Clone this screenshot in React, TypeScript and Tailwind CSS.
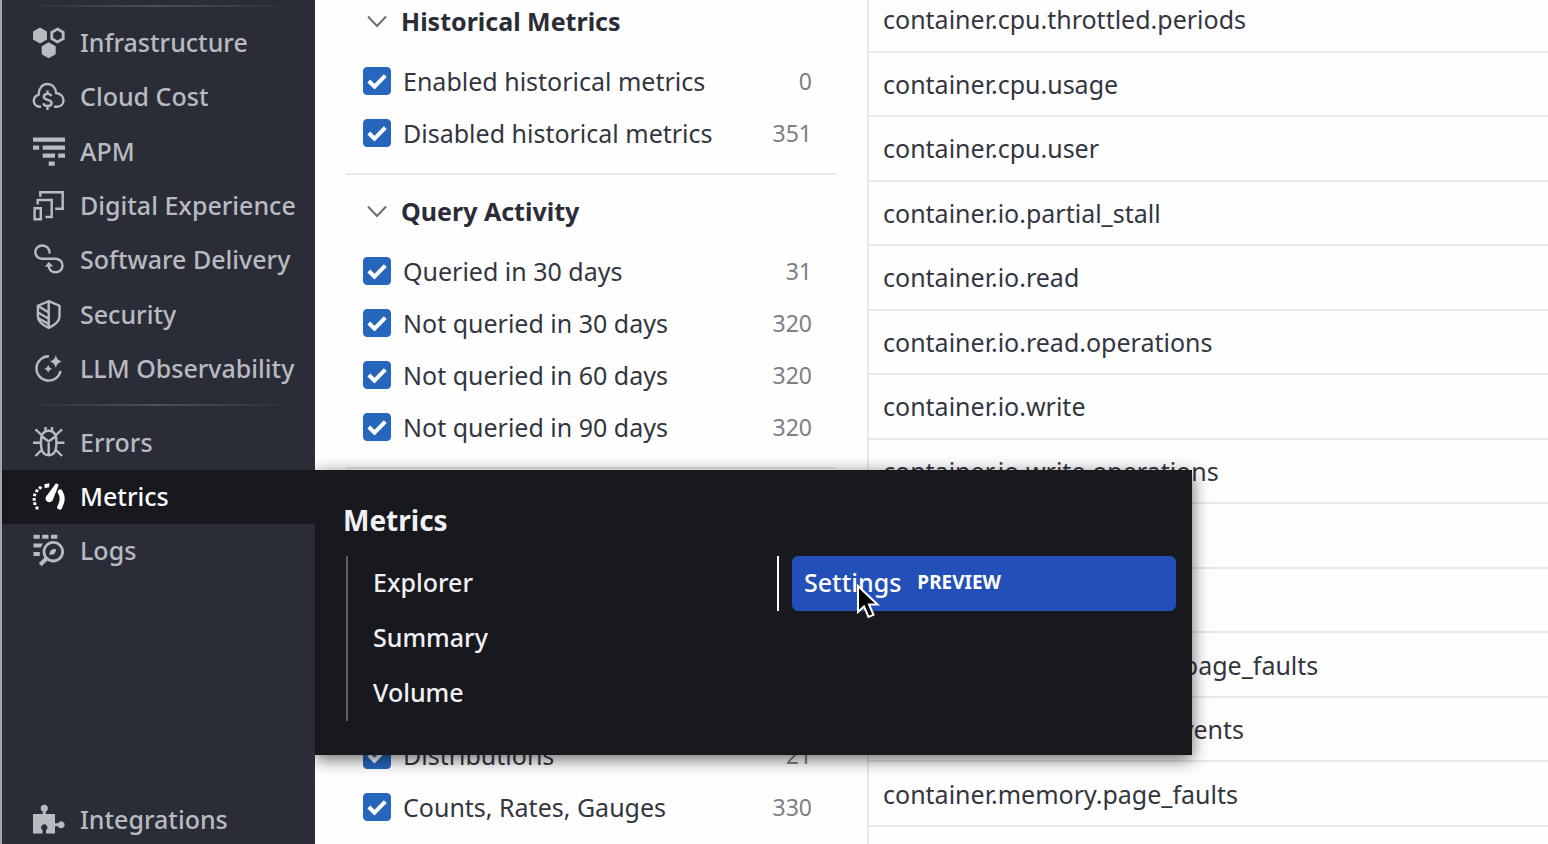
import React from "react";

type IconProps = { children: React.ReactNode };

function Icon({ children }: IconProps) {
  return (
    <svg
      viewBox="0 0 33 32"
      width="33"
      height="32"
      fill="none"
      stroke="currentColor"
      strokeWidth="2.4"
      className="shrink-0 overflow-visible"
      aria-hidden="true"
    >
      {children}
    </svg>
  );
}

const InfrastructureIcon = (
  <Icon>
    <path d="M8 .5l7 4v8l-7 4-7-4v-8z" fill="currentColor" stroke="none" />
    <path d="M25.5 2l5.7 3.2v6.6L25.5 15l-5.7-3.2V5.2z" strokeWidth="2.8" />
    <path d="M16.7 15.2l7 4v8l-7 4-7-4v-8z" fill="currentColor" stroke="none" />
  </Icon>
);

const CloudCostIcon = (
  <Icon>
    <path d="M9 25.8H7.5C4 25.5 1.8 23 1.8 19.8c0-2.9 1.8-5.2 4.7-6C7 7 10.5 3 15.4 3c4.6 0 8.2 3.4 8.7 9 4.500.6 7.400 3.800 7.400 7.500 0 3.600-2.700 6.200-6.300 6.300h-3.200" />
    <path d="M19.300 15.200c-.5-1.700-2-2.300-3.800-2.300-2.200 0-3.700 1.100-3.700 2.900 0 4.200 7.800 2 7.800 6.200 0 1.900-1.700 3-3.900 3-2.200 0-3.900-.9-4.300-2.800M15.500 9.500v4M15.500 24.500v4.500" />
  </Icon>
);

const ApmIcon = (
  <Icon>
    <path
      fill="currentColor"
      stroke="none"
      d="M1 1.500h32v4.200H1zM1 9.500h6.200v4.200H1zM10.700 9.500H33v4.200H10.700zM10.700 17.500H23v4.200H10.700zM26.200 17.500H33v4.200h-6.800zM16.700 25.500h6v4.200h-6z"
    />
  </Icon>
);

const DigitalExperienceIcon = (
  <Icon>
    <path d="M2.600 18.200h6.200v11H2.600zM5.700 14.500V10h14v17h-6.200M8.300 6.700V2.200h22.400v16.500h-7.500" />
  </Icon>
);

const SoftwareDeliveryIcon = (
  <Icon>
    <path d="M17.500 9.500C17.700 4.500 14.600 1.500 10.400 1.500 6.300 1.500 3.300 4.400 3.300 8.100s3 6.600 7.100 6.600h13c4.100 0 7.100 3 7.100 6.800s-3 6.800-7 6.800c-3.800 0-6.500-2.500-6.700-6.300" />
    <path d="M12.800 23l3.800-5 4.800 4.300z" fill="currentColor" stroke="none" />
  </Icon>
);

const SecurityIcon = (
  <Icon>
    <path d="M16.700 2.200l10.800 4.500v10.800c0 5-4.400 8.400-10.800 11.500C10.300 25.900 5.900 22.500 5.900 17.500V6.700zM16.700 2.200V29M7 7.500l9.700 6M6 13.500l10.700 6.200M6 19l10.700 6" />
  </Icon>
);

const LlmIcon = (
  <Icon>
    <path d="M17 3.200A12.200 12.200 0 1 0 28.600 18" />
    <path
      fill="currentColor"
      stroke="none"
      d="M23.800 2.200c1.400 4 2.400 5 6 6.300-3.600 1.300-4.600 2.300-6 6.300-1.400-4-2.400-5-6-6.300 3.600-1.300 4.600-2.300 6-6.300zM16.200 11.800c.9 2.600 1.600 3.200 4 4-2.400.9-3.100 1.600-4 4-.9-2.400-1.600-3.100-4-4 2.400-.8 3.100-1.400 4-4z"
    />
  </Icon>
);

const ErrorsIcon = (
  <Icon>
    <path d="M9.500 9.500C10.500 5.700 13 3.700 16.700 3.700s6.200 2 7.200 5.800c.8 3 .8 10.500-.5 14-1.200 3-3.500 4.700-6.700 4.700s-5.500-1.700-6.700-4.700c-1.300-3.500-1.300-11-.5-14zM9.700 9.200l7 5.300 7-5.300M16.700 14.500V28M13.500 0v4M20 0v4M1 15.700h8M24.500 15.700h8M3.500 2.300l6 5.700M30 2.300L24 8M3.500 29l6.500-6.500M30 29l-6.500-6.500" />
  </Icon>
);

const MetricsIcon = (
  <Icon>
    <path
      fill="currentColor"
      stroke="none"
      d="M3.500 25.500h3v3h-3zM1.300 21.200h3v2.800h-3zM.7 17h3v2.800h-3zM1.500 12.300l3 .6-.8 2.700-2.800-.7zM4.200 8l2.800 1.300-1.600 2.400-2.600-1.500zM8 4.700l2.500 2-2.200 2-2.200-2zM12.300 3.200l5.200-1-.4 4-4.300 1zM24 2.300l2.800 1.500-6 15.200c-1.100 2.200-3.800 2.800-5.700 1.400-1.900-1.400-2-3.700-.6-5.400z"
    />
    <path d="M28.200 11c2.600 4.200 2.500 10-.5 15.200" strokeWidth="5" strokeLinecap="round" />
  </Icon>
);

const LogsIcon = (
  <Icon>
    <path
      fill="currentColor"
      stroke="none"
      d="M1.500-.2h6.300v3.900H1.500zM10.200-.2h6.300v3.900h-6.300zM19-.2h6.300v3.900H19zM1.500 8.500H11l-2.300 3.900H1.500zM1.500 17h6.300v3.900H1.500z"
    />
    <circle cx="21.300" cy="16.700" r="9.300" strokeWidth="2.800" />
    <path d="M14.500 23.500l-6.300 6.200" strokeWidth="4" />
    <path d="M17.500 19.500c0-3.800 2-5.800 6.500-5.600 0 4.200-2.500 6.500-6.500 5.600z" fill="currentColor" stroke="none" />
  </Icon>
);

const IntegrationsIcon = (
  <Icon>
    <path
      fill="currentColor"
      stroke="none"
      d="M1 10h9.800V7.600a3.600 3.600 0 1 1 3 0V10H23v9.300h3a3.500 3.500 0 1 1 0 3H23v7.200h-9v-3.300a3.200 3.200 0 1 0-3.400 0v3.300H1z"
    />
  </Icon>
);

type NavEntry = { label: string; icon: React.ReactNode };

const products: NavEntry[] = [
  { label: "Infrastructure", icon: InfrastructureIcon },
  { label: "Cloud Cost", icon: CloudCostIcon },
  { label: "APM", icon: ApmIcon },
  { label: "Digital Experience", icon: DigitalExperienceIcon },
  { label: "Software Delivery", icon: SoftwareDeliveryIcon },
  { label: "Security", icon: SecurityIcon },
  { label: "LLM Observability", icon: LlmIcon },
];

type NavLinkProps = NavEntry & { active?: boolean };

function NavLink({ label, icon, active = false }: NavLinkProps) {
  return (
    <a
      href="#"
      aria-current={active ? "page" : undefined}
      className={
        active
          ? "flex h-full items-center gap-[15px] bg-[#17191f] pl-[30px] whitespace-nowrap text-white"
          : "flex h-full items-center gap-[15px] pl-[30px] whitespace-nowrap text-[#b8bbc0]"
      }
    >
      {icon}
      <span className="pb-0.5">{label}</span>
    </a>
  );
}

function NavDivider() {
  return (
    <div className="mx-4 h-[2px] shrink-0 bg-linear-to-r from-transparent via-[#4d505b] to-transparent" />
  );
}

function Cursor() {
  return (
    <svg
      viewBox="0 0 24 36"
      width="24"
      height="36"
      className="pointer-events-none absolute top-7 left-16"
      aria-hidden="true"
    >
      <path
        d="M2 2v26l6-5.500 4.500 10.500 5-2.200L13 20.500h8.500z"
        fill="#000"
        stroke="#fff"
        strokeWidth="2"
      />
    </svg>
  );
}

function MetricsMenu() {
  return (
    <div className="absolute top-0 left-full grid h-[285px] w-[877px] content-start bg-[#17191f] pt-8 pr-4 pl-7 text-[#f1f1f3] shadow-[0_4px_16px_rgba(0,0,0,0.6)] [clip-path:inset(-30px_-30px_-30px_0)]">
      <h2 className="text-[28px] leading-9 font-bold">Metrics</h2>
      <div className="mt-[18px] ml-[3px] grid grid-cols-[431px_1fr] items-start">
        <ul className="border-l-2 border-[#5c5e64] pl-[25px]">
          {["Explorer", "Summary", "Volume"].map((label) => (
            <li key={label}>
              <a href="#" className="flex h-[55px] items-center pb-1">
                {label}
              </a>
            </li>
          ))}
        </ul>
        <div className="border-l-2 border-white pl-[13px]">
          <a
            href="#"
            className="relative flex h-[55px] items-center gap-4 rounded-md bg-[#2350b8] pb-1 pl-3 text-white"
          >
            Settings
            <span className="text-[19px] font-bold">PREVIEW</span>
            <Cursor />
          </a>
        </div>
      </div>
    </div>
  );
}

function Sidebar() {
  return (
    <nav
      aria-label="Main"
      className="relative z-10 flex w-[315px] shrink-0 flex-col border-l-2 border-[#a3a6a8] bg-[#2a2d37] pt-[5px] text-[25px] leading-8 font-medium"
    >
      <NavDivider />
      <ul className="mt-[9px] mb-2 grid h-[380px] shrink-0 grid-rows-7">
        {products.map((p) => (
          <li key={p.label}>
            <NavLink {...p} />
          </li>
        ))}
      </ul>
      <NavDivider />
      <ul className="mt-[10px] grid h-[162px] shrink-0 grid-rows-3">
        <li>
          <NavLink label="Errors" icon={ErrorsIcon} />
        </li>
        <li className="relative">
          <NavLink label="Metrics" icon={MetricsIcon} active />
          <MetricsMenu />
        </li>
        <li>
          <NavLink label="Logs" icon={LogsIcon} />
        </li>
      </ul>
      <div className="mt-auto h-12">
        <NavLink label="Integrations" icon={IntegrationsIcon} />
      </div>
    </nav>
  );
}

type Option = [string, number];

function FacetOption({ label, count }: { label: string; count: number }) {
  return (
    <label className="flex h-[52px] items-center text-[#33363e]">
      <span className="mr-3 grid size-7 shrink-0">
        <input
          type="checkbox"
          defaultChecked
          className="peer col-start-1 row-start-1 size-7 appearance-none rounded border border-[#2766bd] checked:bg-[#2766bd]"
        />
        <svg
          viewBox="0 0 28 28"
          className="pointer-events-none invisible col-start-1 row-start-1 size-7 peer-checked:visible"
          fill="none"
          stroke="#fff"
          strokeWidth="4"
          aria-hidden="true"
        >
          <path d="M5.800 14l5.700 5.700L22.300 8.600" />
        </svg>
      </span>
      <span className="flex-1">{label}</span>
      <span className="text-[23px] text-[#7d7f84]">{count}</span>
    </label>
  );
}

function Facet({ title, options }: { title?: string; options: Option[] }) {
  return (
    <section className="border-b-2 border-[#e8e8ea] pt-[18px] pr-6 pb-[14px] pl-[17px]">
      {title && (
        <h3 className="mb-4">
          <button
            type="button"
            className="flex h-9 items-center gap-3 font-bold text-[#2a2d37]"
          >
            <svg
              viewBox="0 0 24 24"
              className="ml-0.5 size-6"
              fill="none"
              stroke="#6d6f74"
              strokeWidth="2"
              aria-hidden="true"
            >
              <path d="M3 7.500l9 9.500 9-9.500" />
            </svg>
            {title}
          </button>
        </h3>
      )}
      {options.map(([label, count]) => (
        <FacetOption key={label} label={label} count={count} />
      ))}
    </section>
  );
}

function Filters() {
  return (
    <aside className="w-[552px] shrink-0 overflow-hidden px-[31px] text-[25px] leading-8">
      <div className="-mt-[15px]">
        <Facet
          title="Historical Metrics"
          options={[
            ["Enabled historical metrics", 0],
            ["Disabled historical metrics", 351],
          ]}
        />
        <Facet
          title="Query Activity"
          options={[
            ["Queried in 30 days", 31],
            ["Not queried in 30 days", 320],
            ["Not queried in 60 days", 320],
            ["Not queried in 90 days", 320],
          ]}
        />
        <div className="mt-[242px]">
          <Facet
            options={[
              ["Distributions", 21],
              ["Counts, Rates, Gauges", 330],
            ]}
          />
        </div>
      </div>
    </aside>
  );
}

const metrics = [
  "container.cpu.throttled.periods",
  "container.cpu.usage",
  "container.cpu.user",
  "container.io.partial_stall",
  "container.io.read",
  "container.io.read.operations",
  "container.io.write",
  "container.io.write.operations",
  "",
  "",
  "container.memory.major_page_faults",
  "container.memory.oom_events",
  "container.memory.page_faults",
];

function MetricsTable() {
  return (
    <main className="min-w-0 flex-1 overflow-hidden border-l-2 border-[#e8e8ea]">
      <table className="-mt-[13px] h-[840px] w-full border-collapse text-[25px] leading-8 text-[#33363e]">
        <tbody>
          {metrics.map((name, i) => (
            <tr key={i} className="h-16 border-b-2 border-[#e8e8ea]">
              <td className="py-0 pl-[14px]">{name}</td>
            </tr>
          ))}
        </tbody>
      </table>
    </main>
  );
}

export default function App() {
  return (
    <div className="flex h-screen overflow-hidden bg-[#fefefe] font-['Noto_Sans',sans-serif]">
      <Sidebar />
      <Filters />
      <MetricsTable />
    </div>
  );
}
